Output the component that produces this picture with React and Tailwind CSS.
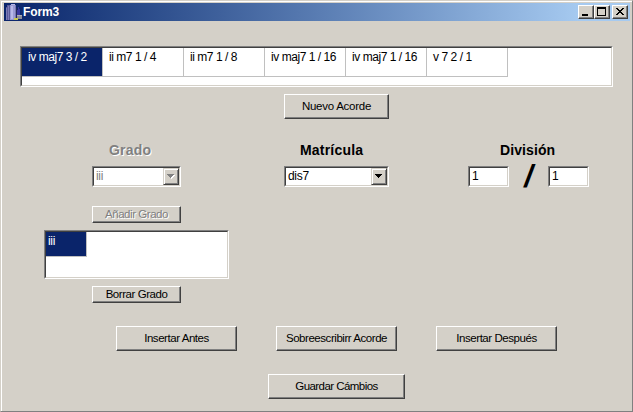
const raised =
  "border border-t-white border-l-white border-r-[#404040] border-b-[#404040] shadow-[inset_-1px_-1px_0_#808080] bg-[#d4d0c8]";
const sunken =
  "border border-t-[#808080] border-l-[#808080] border-r-white border-b-white bg-white";
const sunkenInner =
  "border border-t-[#404040] border-l-[#404040] border-r-[#d4d0c8] border-b-[#d4d0c8]";

function Button({ className, tracking = "tracking-[-0.45px]", disabled, children }) {
  return (
    <button
      disabled={disabled}
      className={`${raised} flex shrink-0 items-center justify-center pb-[2px] text-[11.5px] whitespace-nowrap ${
        disabled ? "text-[#808080] [text-shadow:1px_1px_0_#fff]" : "text-black"
      } ${tracking} ${className}`}
    >
      {children}
    </button>
  );
}

function Sunken({ className, children }) {
  return (
    <div className={`${sunken} shrink-0 ${className}`}>
      <div className={`${sunkenInner} flex h-full w-full items-start`}>{children}</div>
    </div>
  );
}

function Combo({ className, textClass, arrow, disabled, value }) {
  return (
    <Sunken className={`h-[21px] ${className}`}>
      <span className={`grow pl-[2px] leading-[17px] ${textClass}`}>{value}</span>
      <span className="flex h-[17px] w-[16px] items-center justify-center border border-t-[#d4d0c8] border-l-[#d4d0c8] border-r-[#404040] border-b-[#404040] bg-[#d4d0c8] shadow-[inset_1px_1px_0_#fff,inset_-1px_-1px_0_#808080]">
        <svg width="8" height="5" viewBox="0 0 8 5" shapeRendering="crispEdges">
          {disabled && <path d="M1 1h7v1h-1v1h-1v1h-1v1h-1v-1h-1v-1h-1v-1h-1z" fill="#fff" />}
          <path d="M0 0h7v1h-1v1h-1v1h-1v1h-1v-1h-1v-1h-1v-1h-1z" fill={arrow} />
        </svg>
      </span>
    </Sunken>
  );
}

const chords = [
  "iv maj7 3 / 2",
  "ii m7 1 / 4",
  "ii m7 1 / 8",
  "iv maj7 1 / 16",
  "iv maj7 1 / 16",
  "v 7 2 / 1",
];

function AppIcon() {
  return (
    <svg width="17" height="17" viewBox="0 0 17 17" shapeRendering="crispEdges">
      <path d="M2 1h3v15H1V3h1z" fill="#5a5a98" />
      <path d="M1 4h1v12H1zM3 2h1v14H3z" fill="#7c7cb8" />
      <path d="M5 1h6v15H5z" fill="#9a9ad4" />
      <path d="M6 0h4v1H6zM6 2h2v13H6z" fill="#b8b8e8" />
      <path d="M10 1h1v14h-1z" fill="#7878b4" />
      <path d="M11 4h1v10h-1z" fill="#28285c" />
      <path d="M13 3h1v2h1v6h-3V6h1z" fill="#3838a0" />
      <path d="M12 11h5v4h-5z" fill="#8c8c98" />
      <path d="M12 11h5v1h-5z" fill="#acacb4" />
      <path d="M9 14h4v2H9z" fill="#c8c850" />
    </svg>
  );
}

function Caption({ className = "", children }) {
  return (
    <span
      className={`flex h-[14px] w-[16px] border border-t-white border-l-white border-r-[#404040] border-b-[#404040] bg-[#d4d0c8] shadow-[inset_-1px_-1px_0_#808080] ${className}`}
    >
      <svg width="14" height="12" viewBox="0 0 14 12" shapeRendering="crispEdges">
        {children}
      </svg>
    </span>
  );
}

export default function App() {
  return (
    <div className="flex h-[412px] w-[633px] flex-col overflow-hidden border border-t-[#d4d0c8] border-l-[#d4d0c8] border-r-[#808080] border-b-[#808080] bg-[#d4d0c8] font-['Liberation_Sans',sans-serif] text-[12px] leading-[14px] tracking-[-0.3px] text-black shadow-[inset_1px_1px_0_#fff]">
      <header className="mt-[2px] ml-[3px] flex h-[18px] w-[626px] shrink-0 items-center bg-linear-to-r from-[#0a246a] to-[#a6caf0] to-92% pr-[2px] pl-[1px]">
        <AppIcon />
        <h1 className="ml-[1px] grow text-[12px] font-bold tracking-[-0.1px] text-white">Form3</h1>
        <Caption>
          <path d="M3 8h6v2H3z" fill="#000" />
        </Caption>
        <Caption>
          <path d="M2 1h9v9H2zM3 3v6h7V3z" fillRule="evenodd" fill="#000" />
        </Caption>
        <Caption className="ml-[2px]">
          <path
            d="M3 2h2v1h1v1h2V3h1V2h2v1h-1v1H9v1H8v1h1v1h1v1h1v1H9V8H8V7H6v1H5v1H3V8h1V7h1V6h1V5H5V4H4V3H3z"
            fill="#000"
          />
        </Caption>
      </header>

      <Sunken className="mt-[25px] ml-[19px] h-[41px] w-[593px]">
        {chords.map((name, i) => (
          <div
            key={i}
            className={`h-[29px] w-[81px] shrink-0 border-r border-b border-[#c0c0c0] pt-[2px] pl-[6px] tracking-[-0.45px] whitespace-pre ${
              i === 0 ? "bg-[#0a246a] text-white" : "bg-white"
            }`}
          >
            {name}
          </div>
        ))}
      </Sunken>

      <Button className="mt-[7px] ml-[283px] h-[25px] w-[105px]" tracking="tracking-[-0.25px]">
        Nuevo Acorde
      </Button>

      <main className="mt-[23px] ml-[43px] flex h-[161px] shrink-0 items-start">
        <section className="flex w-[185px] flex-col">
          <h2 className="ml-[65px] h-[24px] text-[14px] leading-[16px] font-bold tracking-[0.2px] text-[#808080] [text-shadow:1px_1px_0_#fff]">
            Grado
          </h2>
          <Combo className="ml-[48px] w-[89px]" textClass="text-[#808080]" arrow="#808080" disabled value="iii" />
          <Button className="mt-[19px] ml-[48px] h-[17px] w-[89px]" disabled>
            Añadir Grado
          </Button>
          <Sunken className="mt-[7px] h-[49px] w-[185px]">
            <div className="h-[25px] w-[41px] border-r border-b border-[#c0c0c0] bg-[#0a246a] pt-[2px] pl-[2px] text-white">
              iii
            </div>
          </Sunken>
          <Button className="mt-[7px] ml-[48px] h-[17px] w-[89px]">Borrar Grado</Button>
        </section>

        <section className="ml-[55px] flex w-[105px] flex-col">
          <h2 className="ml-[16px] h-[24px] text-[14px] leading-[16px] font-bold tracking-[0.2px]">Matrícula</h2>
          <Combo className="w-[105px]" textClass="text-black" arrow="#000" value="dis7" />
        </section>

        <section className="ml-[79px] flex w-[121px] flex-col">
          <h2 className="ml-[32px] h-[24px] text-[14px] leading-[16px] font-bold tracking-[0.1px]">División</h2>
          <div className="flex h-[21px]">
            <Sunken className="h-[21px] w-[41px]">
              <span className="pl-[2px] leading-[17px]">1</span>
            </Sunken>
            <span className="w-[39px] text-center text-[31px] leading-[21px] font-bold italic">/</span>
            <Sunken className="h-[21px] w-[41px]">
              <span className="pl-[2px] leading-[17px]">1</span>
            </Sunken>
          </div>
        </section>
      </main>

      <div className="mt-[23px] ml-[115px] flex gap-[39px]">
        <Button className="h-[25px] w-[121px]">Insertar Antes</Button>
        <Button className="h-[25px] w-[121px]">Sobreescribirr Acorde</Button>
        <Button className="h-[25px] w-[121px]">Insertar Después</Button>
      </div>

      <Button className="mt-[23px] ml-[267px] h-[25px] w-[137px]" tracking="tracking-[-0.55px]">
        Guardar Cámbios
      </Button>
    </div>
  );
}
